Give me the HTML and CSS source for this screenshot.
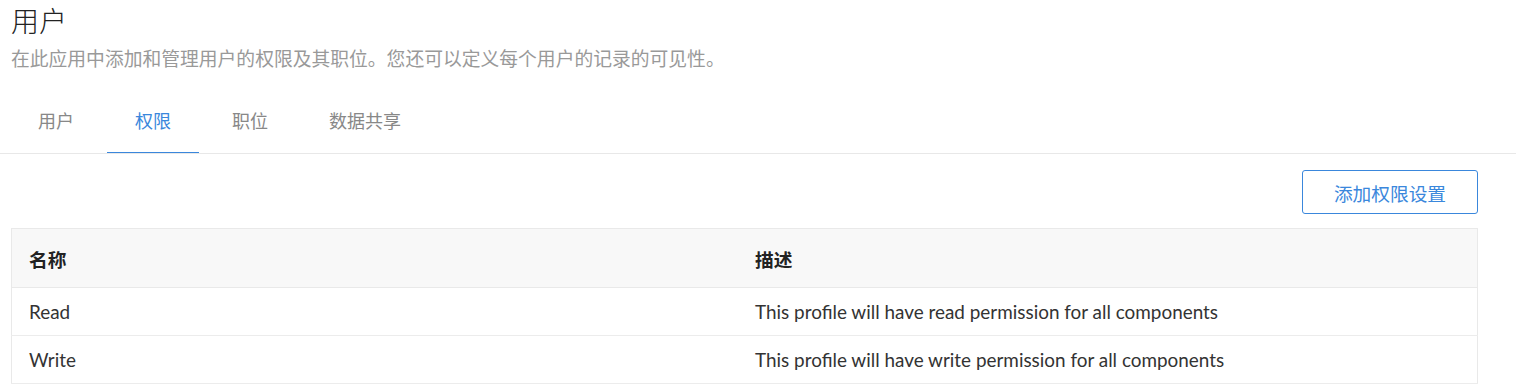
FILE: index.html
```html
<!DOCTYPE html>
<html lang="zh-CN">
<head>
    <meta charset="UTF-8">
    <title>用户</title>
    <link rel="stylesheet" href="styles.css">
</head>
<body>
    <div class="page-head">
        <h1>用户</h1>
        <p class="subtitle">在此应用中添加和管理用户的权限及其职位。您还可以定义每个用户的记录的可见性。</p>
    </div>

    <div class="tabs">
        <a class="tab">用户</a>
        <a class="tab active">权限</a>
        <a class="tab">职位</a>
        <a class="tab">数据共享</a>
    </div>

    <div class="content">
        <div class="toolbar">
            <button class="btn-outline">添加权限设置</button>
        </div>

        <table class="profiles">
            <thead>
                <tr>
                    <th class="col-name">名称</th>
                    <th>描述</th>
                </tr>
            </thead>
            <tbody>
                <tr>
                    <td>Read</td>
                    <td>This profile will have read permission for all components</td>
                </tr>
                <tr>
                    <td>Write</td>
                    <td>This profile will have write permission for all components</td>
                </tr>
            </tbody>
        </table>
    </div>
</body>
</html>
```

FILE: styles.css
```css
body {
    margin: 0;
    font-family: Lato, "Noto Sans CJK SC", sans-serif;
    color: #333;
    background: #fff;
}

.page-head { padding: 0 11px; }
h1 {
    margin: 0;
    padding-top: 2px;
    font-size: 28px;
    font-weight: 300;
    line-height: 38px;
    color: #222;
}
.subtitle {
    margin: 6px 0 0;
    font-size: 18.8px;
    line-height: 26px;
    color: #999;
}

/* 选项卡 */
.tabs {
    display: flex;
    gap: 5px;
    margin-top: 24px;
    padding-left: 10px;
    border-bottom: 1px solid #e8e8e8;
}
.tab {
    padding: 0 28px;
    height: 58px;
    line-height: 50px;
    font-size: 18px;
    color: #888;
    cursor: pointer;
    border-bottom: 1px solid transparent;
    margin-bottom: -1px;
    box-sizing: border-box;
}
.tab.active {
    color: #3a87dc;
    border-bottom: 1px solid #3a87dc;
    height: 57px;
    margin-bottom: 0;
}

.content { padding: 16px 38px 0 11px; }
.toolbar { display: flex; justify-content: flex-end; }
.btn-outline {
    width: 176px;
    height: 44px;
    border: 1px solid #3a87dc;
    border-radius: 3px;
    background: #fff;
    color: #3a87dc;
    font-family: inherit;
    font-size: 18.7px;
    cursor: pointer;
}

table.profiles {
    width: 100%;
    margin-top: 14px;
    border-collapse: collapse;
    border: 1px solid #e9e9e9;
}
.profiles th {
    height: 58px;
    padding: 0 17px;
    background: #f8f8f8;
    text-align: left;
    font-size: 18.7px;
    font-weight: bold;
    color: #222;
    border-bottom: 1px solid #e9e9e9;
}
.profiles td {
    height: 47px;
    padding: 0 17px;
    font-size: 18.9px;
    color: #333;
    border-bottom: 1px solid #ececec;
}
.profiles .col-name { width: 692px; }
```
